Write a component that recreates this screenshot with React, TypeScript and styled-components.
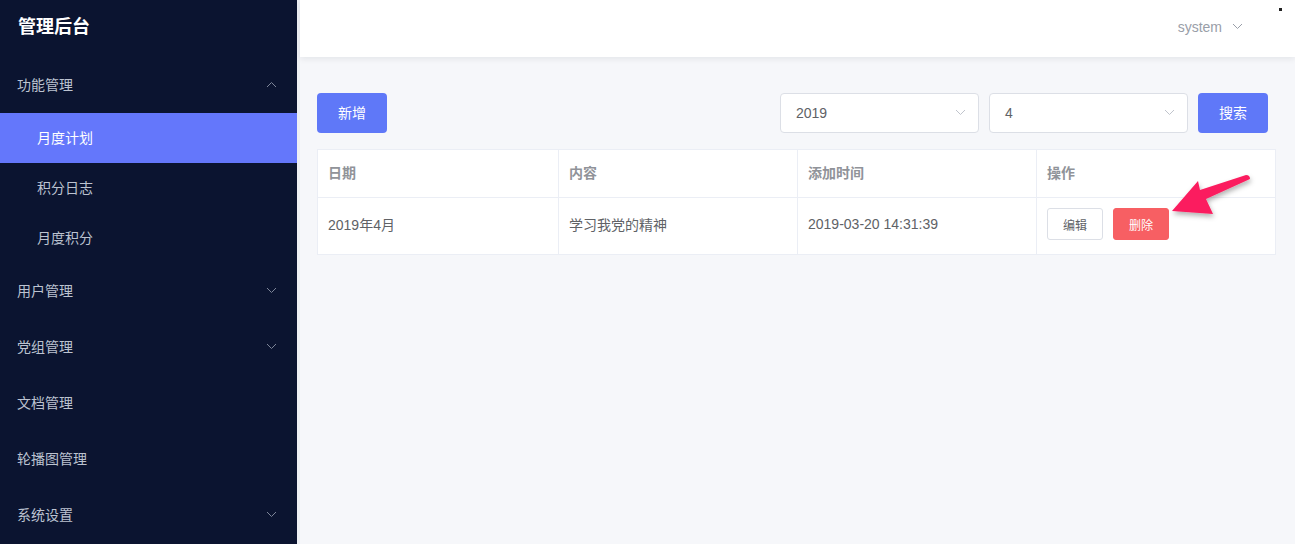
import React from "react";
import styled, { createGlobalStyle } from "styled-components";

const GlobalStyle = createGlobalStyle`
  html, body {
    margin: 0;
    padding: 0;
    background: #f6f7fa;
  }
  body {
    font-family: "Liberation Sans", "Noto Sans CJK SC", sans-serif;
    font-size: 14px;
  }
  * {
    box-sizing: border-box;
  }
`;

const Layout = styled.div`
  display: flex;
  width: 100%;
  height: 544px;
  overflow: hidden;
`;

const Sidebar = styled.aside`
  width: 297px;
  flex-shrink: 0;
  background: #0b1430;
  display: flex;
  flex-direction: column;
`;

const Brand = styled.div`
  height: 57px;
  display: flex;
  align-items: center;
  padding-left: 18px;
  padding-bottom: 7px;
  color: #ffffff;
  font-size: 18px;
  font-weight: 700;
  font-family: "Noto Sans CJK SC", sans-serif;
`;

const MenuItem = styled.div<{ $sub?: boolean; $active?: boolean }>`
  height: ${(p) => (p.$sub ? "50px" : "56px")};
  display: flex;
  align-items: center;
  justify-content: space-between;
  padding-left: ${(p) => (p.$sub ? "37px" : "17px")};
  padding-right: 20px;
  padding-bottom: 2px;
  color: ${(p) => (p.$active ? "#ffffff" : "#bcc3d0")};
  background: ${(p) => (p.$active ? "#6477fb" : "transparent")};
  font-size: 14px;
  font-family: "Noto Sans CJK SC", sans-serif;
`;

const Chevron = ({ up }: { up?: boolean }) => (
  <svg width="11" height="7" viewBox="0 0 11 7" fill="none">
    <path
      d={up ? "M1 6 L5.5 1.5 L10 6" : "M1 1 L5.5 5.5 L10 1"}
      stroke="currentColor"
      strokeWidth="1"
    />
  </svg>
);

const MenuArrow = styled.span`
  color: #7d8598;
  display: flex;
  align-items: center;
`;

const Main = styled.div`
  flex: 1;
  display: flex;
  flex-direction: column;
  border-left: 3px solid #eef0f4;
  position: relative;
`;

const Header = styled.header`
  height: 57px;
  background: #ffffff;
  box-shadow: 0 2px 6px rgba(0, 21, 41, 0.08);
  display: flex;
  align-items: center;
  justify-content: flex-end;
  padding-right: 52px;
  padding-bottom: 4px;
  position: relative;
`;

const UserName = styled.div`
  display: flex;
  align-items: center;
  gap: 10px;
  color: #999ea8;
  font-size: 14px;
`;

const Dot = styled.span`
  position: absolute;
  top: 8px;
  right: 13px;
  width: 3px;
  height: 3px;
  background: #222;
`;

const Content = styled.div`
  padding: 36px 19px 20px 17px;
  position: relative;
`;

const Toolbar = styled.div`
  display: flex;
  align-items: center;
  gap: 10px;
  padding-right: 8px;
  margin-bottom: 16px;
`;

const Spacer = styled.div`
  flex: 1;
`;

const PrimaryButton = styled.button`
  width: 70px;
  height: 40px;
  border: none;
  border-radius: 4px;
  background: #5f78f8;
  color: #ffffff;
  font-size: 14px;
  font-family: "Noto Sans CJK SC", sans-serif;
  padding: 0 0 2px;
`;

const Select = styled.div`
  width: 199px;
  height: 40px;
  border: 1px solid #dcdfe6;
  border-radius: 4px;
  background: #ffffff;
  display: flex;
  align-items: center;
  justify-content: space-between;
  padding: 0 12px 1px 15px;
  color: #606266;
  font-size: 14px;
`;

const SelectArrow = styled.span`
  color: #c0c4cc;
  display: flex;
`;

const Table = styled.div`
  border: 1px solid #ebeef5;
  background: #ffffff;
  position: relative;
`;

const Row = styled.div<{ $head?: boolean }>`
  display: grid;
  grid-template-columns: 241px 239px 239px 1fr;
  height: ${(p) => (p.$head ? "48px" : "56px")};
  border-bottom: ${(p) => (p.$head ? "1px solid #ebeef5" : "none")};
`;

const Cell = styled.div<{ $head?: boolean }>`
  display: flex;
  align-items: center;
  gap: 10px;
  padding: 0 0 4px 10px;
  border-right: 1px solid #ebeef5;
  color: ${(p) => (p.$head ? "#909399" : "#606266")};
  font-weight: ${(p) => (p.$head ? 600 : 400)};
  font-size: 14px;
  &:last-child {
    border-right: none;
  }
`;

const SmallButton = styled.button<{ $danger?: boolean }>`
  width: 56px;
  height: 32px;
  border-radius: 3px;
  border: 1px solid ${(p) => (p.$danger ? "#f75f63" : "#dcdfe6")};
  background: ${(p) => (p.$danger ? "#f75f63" : "#ffffff")};
  color: ${(p) => (p.$danger ? "#ffffff" : "#606266")};
  font-size: 12px;
  font-family: "Noto Sans CJK SC", sans-serif;
  padding: 0;
`;

const Pointer = styled.svg`
  position: absolute;
  left: 848px;
  top: 19px;
  overflow: visible;
`;

const menu = [
  { label: "功能管理", arrow: "up" },
  { label: "月度计划", sub: true, active: true },
  { label: "积分日志", sub: true },
  { label: "月度积分", sub: true },
  { label: "用户管理", arrow: "down" },
  { label: "党组管理", arrow: "down" },
  { label: "文档管理" },
  { label: "轮播图管理" },
  { label: "系统设置", arrow: "down" },
];

const columns = ["日期", "内容", "添加时间", "操作"];

const App: React.FC = () => {
  return (
    <>
      <GlobalStyle />
      <Layout>
        <Sidebar>
          <Brand>管理后台</Brand>
          {menu.map((m, i) => (
            <MenuItem key={i} $sub={m.sub} $active={m.active}>
              <span>{m.label}</span>
              {m.arrow && (
                <MenuArrow>
                  <Chevron up={m.arrow === "up"} />
                </MenuArrow>
              )}
            </MenuItem>
          ))}
        </Sidebar>
        <Main>
          <Header>
            <UserName>
              system
              <Chevron />
            </UserName>
            <Dot />
          </Header>
          <Content>
            <Toolbar>
              <PrimaryButton>新增</PrimaryButton>
              <Spacer />
              <Select>
                2019
                <SelectArrow>
                  <Chevron />
                </SelectArrow>
              </Select>
              <Select>
                4
                <SelectArrow>
                  <Chevron />
                </SelectArrow>
              </Select>
              <PrimaryButton>搜索</PrimaryButton>
            </Toolbar>
            <Table>
              <Row $head>
                {columns.map((c) => (
                  <Cell key={c} $head>
                    {c}
                  </Cell>
                ))}
              </Row>
              <Row>
                <Cell>2019年4月</Cell>
                <Cell>学习我党的精神</Cell>
                <Cell>2019-03-20 14:31:39</Cell>
                <Cell>
                  <SmallButton>编辑</SmallButton>
                  <SmallButton $danger>删除</SmallButton>
                </Cell>
              </Row>
              <Pointer width="90" height="52" viewBox="0 0 90 52">
                <defs>
                  <filter id="sh" x="-30%" y="-30%" width="160%" height="180%">
                    <feDropShadow dx="1" dy="3" stdDeviation="2.5" floodColor="#000" floodOpacity="0.3" />
                  </filter>
                </defs>
                <path
                  d="M6 42 L32 12 L34 21 L80 6 Q84 6 84 10 L40 30 L47 45 Z"
                  fill="#fb1d5e"
                  filter="url(#sh)"
                />
              </Pointer>
            </Table>
          </Content>
        </Main>
      </Layout>
    </>
  );
};

export default App;
